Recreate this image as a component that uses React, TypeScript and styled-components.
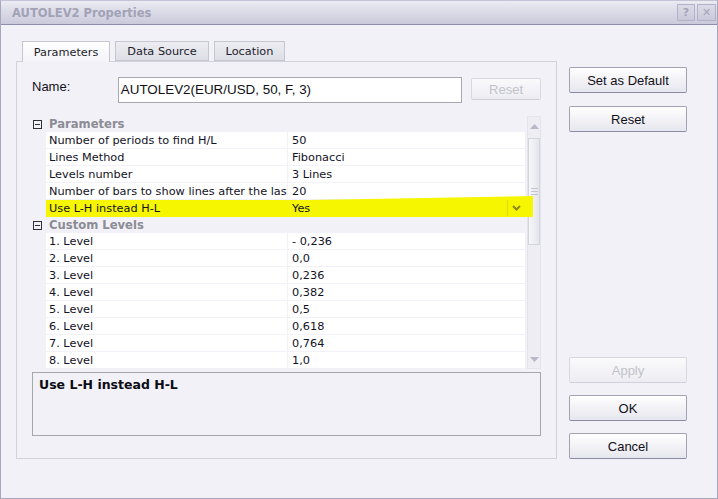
import React from 'react';
import styled, { createGlobalStyle } from 'styled-components';

const GlobalStyle = createGlobalStyle`
  body {
    margin: 0;
    background: #f1f1f7;
    font-family: "DejaVu Sans", sans-serif;
  }
`;

const Window = styled.div`
  width: 718px;
  height: 499px;
  box-sizing: border-box;
  border: 1px solid #a6a6bd;
  border-top-color: #c4c4d6;
  background: #f1f1f7;
  display: flex;
  flex-direction: column;
`;

const TitleBar = styled.div`
  height: 24px;
  box-sizing: border-box;
  border-bottom: 1px solid #8e8eaa;
  background: linear-gradient(#ebebf3, #c9c9db);
  display: flex;
  align-items: center;
  padding: 0 1px 0 11px;
`;

const Caption = styled.div`
  flex: 1;
  font-family: "DejaVu Sans", sans-serif;
  font-weight: bold;
  font-size: 11.5px;
  color: #a2a2b6;
`;

const CaptionButton = styled.div<{ $w: number }>`
  width: ${(p) => p.$w}px;
  height: 17px;
  box-sizing: border-box;
  border: 1px solid #b2b2c8;
  background: linear-gradient(#dcdce8, #c8c8da);
  margin-left: 2px;
  display: flex;
  align-items: center;
  justify-content: center;
  font-family: "DejaVu Sans", sans-serif;
  font-weight: bold;
  font-size: 11px;
  color: #a4a4ba;
`;

const Body = styled.div`
  flex: 1;
  display: flex;
  gap: 12px;
  padding: 16px 0 0 15px;
`;

const LeftColumn = styled.div`
  width: 541px;
  display: flex;
  flex-direction: column;
`;

const TabRow = styled.div`
  display: flex;
  gap: 5px;
  padding-left: 6px;
  height: 20px;
  position: relative;
  z-index: 1;
`;

const Tab = styled.div<{ $w: number; $active?: boolean }>`
  width: ${(p) => p.$w}px;
  height: ${(p) => (p.$active ? 21 : 20)}px;
  box-sizing: border-box;
  border: 1px solid #c6c6d0;
  border-bottom: ${(p) => (p.$active ? 'none' : '1px solid #c6c6d0')};
  background: ${(p) => (p.$active ? 'linear-gradient(#ffffff, #f3f3f8)' : 'linear-gradient(#ececf2, #dedee6)')};
  display: flex;
  align-items: center;
  justify-content: center;
  padding-top: 1px;
  font-size: 11.3px;
  color: #1c1c2c;
`;

const Panel = styled.div`
  height: 398px;
  box-sizing: border-box;
  border: 1px solid #d2d2da;
  padding: 15px 15px 0 15px;
  display: flex;
  flex-direction: column;
`;

const NameRow = styled.div`
  display: flex;
  align-items: flex-start;
  height: 26px;
`;

const NameLabel = styled.div`
  width: 86px;
  padding-top: 2px;
  font-family: "Liberation Sans", sans-serif;
  font-size: 13px;
  color: #101018;
`;

const NameInput = styled.div`
  width: 345px;
  height: 26px;
  box-sizing: border-box;
  border: 1px solid #a8a8b2;
  background: #ffffff;
  padding: 4px 2px;
  font-family: "Liberation Sans", sans-serif;
  font-size: 13.4px;
  color: #101018;
`;

const Button = styled.div<{ $w: number; $h: number; $disabled?: boolean }>`
  width: ${(p) => p.$w}px;
  height: ${(p) => p.$h}px;
  box-sizing: border-box;
  border: 1px solid ${(p) => (p.$disabled ? '#d8d8e0' : '#a2a2b2')};
  border-bottom-color: ${(p) => (p.$disabled ? '#d0d0da' : '#8a8aa0')};
  border-radius: 2px;
  background: ${(p) =>
    p.$disabled ? 'linear-gradient(#fafafc, #ececf2)' : 'linear-gradient(#ffffff, #e6e6ee)'};
  display: flex;
  align-items: center;
  justify-content: center;
  font-family: "Liberation Sans", sans-serif;
  font-size: 13px;
  color: ${(p) => (p.$disabled ? '#c2c2ca' : '#101018')};
`;

const NameReset = styled(Button)`
  margin: 1px 0 0 9px;
`;

const Grid = styled.div`
  margin-top: 13px;
  height: 253px;
  display: flex;
  position: relative;
`;

const GridBody = styled.div`
  width: 493px;
  display: flex;
  flex-direction: column;
`;

const SectionHeader = styled.div`
  height: 16px;
  display: flex;
  align-items: center;
  font-weight: bold;
  font-size: 11.6px;
  color: #8c8c94;
`;

const Minus = styled.div`
  width: 9px;
  height: 9px;
  box-sizing: border-box;
  border: 1px solid #303038;
  margin: 0 7px 0 1px;
  position: relative;
  &::after {
    content: '';
    position: absolute;
    left: 1px;
    right: 1px;
    top: 3px;
    height: 1px;
    background: #303038;
  }
`;

const Row = styled.div<{ $hl?: boolean }>`
  height: 16px;
  margin: 0 0 1px 14px;
  display: flex;
  gap: 1px;
  position: relative;
  ${(p) =>
    p.$hl &&
    `
    &::before {
      content: '';
      position: absolute;
      left: 0;
      right: -8px;
      top: -4px;
      bottom: -1px;
      background: #f6f600;
      clip-path: polygon(0 30%, 48% 22%, 100% 0, 100% 100%, 0 100%);
    }
  `}
`;

const Cell = styled.div<{ $w: number; $hl?: boolean }>`
  width: ${(p) => p.$w}px;
  height: 16px;
  background: ${(p) => (p.$hl ? '#f6f600' : '#ffffff')};
  padding-left: ${(p) => (p.$w > 240 ? 3 : 4)}px;
  box-sizing: border-box;
  display: flex;
  align-items: center;
  font-size: 11.3px;
  color: #121226;
  white-space: nowrap;
  overflow: hidden;
  position: relative;
`;

const CellText = styled.span`
  flex: 1;
  overflow: hidden;
  text-overflow: clip;
`;

const DropButton = styled.div`
  width: 17px;
  height: 16px;
  border-left: 1px solid #dcdc00;
  display: flex;
  align-items: center;
  justify-content: center;
`;

const ScrollBar = styled.div`
  width: 14px;
  margin-left: 2px;
  box-sizing: border-box;
  border: 1px solid #e4e4ec;
  background: #ededf3;
  display: flex;
  flex-direction: column;
  align-items: center;
`;

const Arrow = styled.div<{ $up?: boolean }>`
  height: 18px;
  display: flex;
  align-items: center;
  justify-content: center;
  margin-top: ${(p) => (p.$up ? 0 : 'auto')};
`;

const Thumb = styled.div`
  width: 12px;
  height: 107px;
  margin-top: 3px;
  box-sizing: border-box;
  border: 1px solid #d4d4de;
  background: linear-gradient(90deg, #f6f6fa, #e4e4ec);
  display: flex;
  flex-direction: column;
  align-items: center;
  justify-content: center;
  gap: 2px;
`;

const Grip = styled.div`
  width: 7px;
  height: 1px;
  background: #c4c4d0;
`;

const Description = styled.div`
  margin-top: 3px;
  height: 64px;
  box-sizing: border-box;
  border: 1px solid #a6a6ae;
  padding: 4px 6px;
  font-weight: bold;
  font-size: 12.5px;
  color: #0c0c14;
`;

const RightColumn = styled.div`
  width: 118px;
  padding-top: 26px;
  display: flex;
  flex-direction: column;
  gap: 13px;
`;

const Spacer = styled.div`
  flex: 1;
`;

const BottomButtons = styled.div`
  display: flex;
  flex-direction: column;
  gap: 12px;
  padding-bottom: 39px;
`;

const params = [
  { name: 'Number of periods to find H/L', value: '50' },
  { name: 'Lines Method', value: 'Fibonacci' },
  { name: 'Levels number', value: '3 Lines' },
  { name: 'Number of bars to show lines after the last bar', value: '20' },
  { name: 'Use L-H instead H-L', value: 'Yes', selected: true },
];

const levels = ['- 0,236', '0,0', '0,236', '0,382', '0,5', '0,618', '0,764', '1,0'];

const Chevron = () => (
  <svg width="9" height="6" viewBox="0 0 9 6">
    <path d="M1 1 L4.5 4.5 L8 1" stroke="#8a8a10" strokeWidth="2" fill="none" />
  </svg>
);

const Tri = ({ up }: { up?: boolean }) => (
  <svg width="9" height="5" viewBox="0 0 9 5">
    <path d={up ? 'M0 5 L4.5 0 L9 5 Z' : 'M0 0 L4.5 5 L9 0 Z'} fill="#b8b8c8" />
  </svg>
);

const App: React.FC = () => {
  return (
    <>
      <GlobalStyle />
      <Window>
        <TitleBar>
          <Caption>AUTOLEV2 Properties</Caption>
          <CaptionButton $w={18}>?</CaptionButton>
          <CaptionButton $w={19}>✕</CaptionButton>
        </TitleBar>

        <Body>
          <LeftColumn>
            <TabRow>
              <Tab $w={88} $active>Parameters</Tab>
              <Tab $w={94}>Data Source</Tab>
              <Tab $w={71}>Location</Tab>
            </TabRow>

            <Panel>
              <NameRow>
                <NameLabel>Name:</NameLabel>
                <NameInput>AUTOLEV2(EUR/USD, 50, F, 3)</NameInput>
                <NameReset $w={70} $h={22} $disabled>Reset</NameReset>
              </NameRow>

              <Grid>
                <GridBody>
                  <SectionHeader>
                    <Minus />
                    Parameters
                  </SectionHeader>
                  {params.map((p) => (
                    <Row key={p.name} $hl={p.selected}>
                      <Cell $w={241} $hl={p.selected}>
                        <CellText>{p.name}</CellText>
                      </Cell>
                      <Cell $w={237} $hl={p.selected}>
                        <CellText>{p.value}</CellText>
                        {p.selected && (
                          <DropButton>
                            <Chevron />
                          </DropButton>
                        )}
                      </Cell>
                    </Row>
                  ))}
                  <SectionHeader>
                    <Minus />
                    Custom Levels
                  </SectionHeader>
                  {levels.map((v, i) => (
                    <Row key={i}>
                      <Cell $w={241}>
                        <CellText>{i + 1}. Level</CellText>
                      </Cell>
                      <Cell $w={237}>
                        <CellText>{v}</CellText>
                      </Cell>
                    </Row>
                  ))}
                </GridBody>
                <ScrollBar>
                  <Arrow $up>
                    <Tri up />
                  </Arrow>
                  <Thumb>
                    <Grip />
                    <Grip />
                    <Grip />
                  </Thumb>
                  <Arrow>
                    <Tri />
                  </Arrow>
                </ScrollBar>
              </Grid>

              <Description>Use L-H instead H-L</Description>
            </Panel>
          </LeftColumn>

          <RightColumn>
            <Button $w={118} $h={26}>Set as Default</Button>
            <Button $w={118} $h={26}>Reset</Button>
            <Spacer />
            <BottomButtons>
              <Button $w={118} $h={26} $disabled>Apply</Button>
              <Button $w={118} $h={26}>OK</Button>
              <Button $w={118} $h={26}>Cancel</Button>
            </BottomButtons>
          </RightColumn>
        </Body>
      </Window>
    </>
  );
};

export default App;
